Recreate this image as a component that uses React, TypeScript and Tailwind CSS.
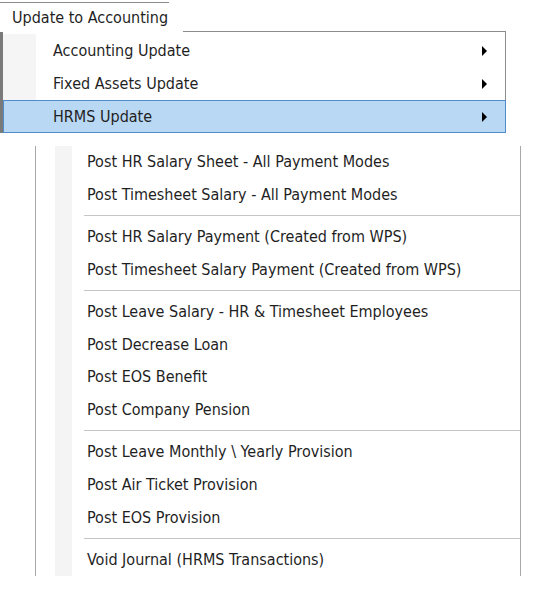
import React from "react";

const font = { fontFamily: '"DejaVu Sans Condensed", "DejaVu Sans", sans-serif' };

function Arrow() {
  return (
    <svg width="6" height="10" viewBox="0 0 6 10" className="block">
      <path d="M0 0 L5 5 L0 10 Z" fill="#000" />
    </svg>
  );
}

type Item = { t: string } | { sep: true };

const items: Item[] = [
  { t: "Post HR Salary Sheet - All Payment Modes" },
  { t: "Post Timesheet Salary - All Payment Modes" },
  { sep: true },
  { t: "Post HR Salary Payment (Created from WPS)" },
  { t: "Post Timesheet Salary Payment (Created from WPS)" },
  { sep: true },
  { t: "Post Leave Salary - HR & Timesheet Employees" },
  { t: "Post Decrease Loan" },
  { t: "Post EOS Benefit" },
  { t: "Post Company Pension" },
  { sep: true },
  { t: "Post Leave Monthly \\ Yearly Provision" },
  { t: "Post Air Ticket Provision" },
  { t: "Post EOS Provision" },
  { sep: true },
  { t: "Void Journal (HRMS Transactions)" },
];

export default function App() {
  return (
    <div
      className="w-[542px] h-[590px] bg-white text-[16px] text-[#1f1f1f] overflow-hidden"
      style={font}
    >
      <div className="pt-[2px]">
        <div className="w-[169px] h-[29px] border-t border-[#8c8c8c] pl-3 pt-px flex items-center">
          Update to Accounting
        </div>
        <div className="w-[506px] flex flex-col">
          <div className="h-px ml-[183px] bg-[#8c8c8c]" />
          <div className="border-l-[3px] border-l-[#7a7a7a] border-r border-r-[#8c8c8c] pt-[2px] flex flex-col">
            {["Accounting Update", "Fixed Assets Update"].map((t) => (
              <div key={t} className="h-[33px] flex items-stretch">
                <div className="w-[33px] bg-[#f5f5f5]" />
                <div className="flex-1 pl-[17px] flex items-center">{t}</div>
                <div className="pr-[17px] flex items-center">
                  <Arrow />
                </div>
              </div>
            ))}
            <div className="h-[33px] flex items-stretch border border-[#4f8cc9] bg-[#b9d8f3] -mr-px">
              <div className="w-[32px]" />
              <div className="flex-1 pl-[17px] flex items-center">HRMS Update</div>
              <div className="pr-[17px] flex items-center">
                <Arrow />
              </div>
            </div>
          </div>
        </div>
      </div>

      <div className="mt-[13px] ml-[35px] w-[486px] h-[430px] border-l border-r border-[#a8a8a8] flex">
        <div className="w-[19px] bg-white" />
        <div className="w-[17px] bg-[#f4f4f4]" />
        <div className="flex-1 flex flex-col">
          {items.map((it, i) =>
            "sep" in it ? (
              <div key={i} className="h-[9px] flex items-center pl-[12px]">
                <div className="w-full h-[2px] border-t border-[#c6c6c6] border-b border-b-white" />
              </div>
            ) : (
              <div key={i} className="h-[33px] flex items-center pl-[15px]">
                {it.t}
              </div>
            )
          )}
        </div>
      </div>
    </div>
  );
}
